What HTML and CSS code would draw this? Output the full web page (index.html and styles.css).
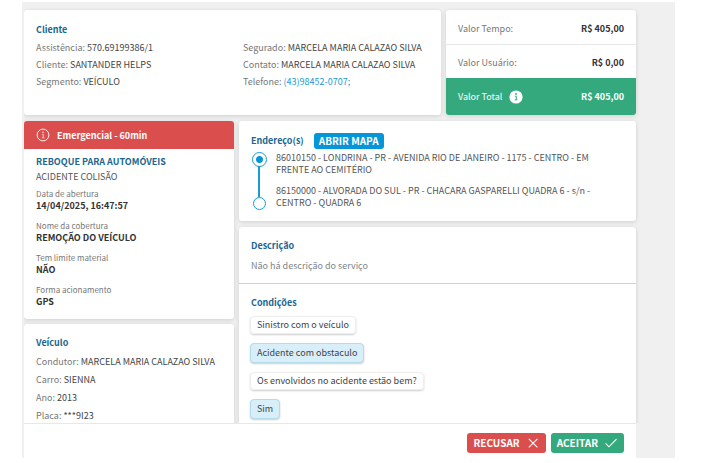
FILE: index.html
```html
<!DOCTYPE html>
<html lang="pt-BR">
<head>
<meta charset="utf-8">
<title>Atendimento</title>
<link rel="stylesheet" href="styles.css">
</head>
<body>
<div class="app">
  <main class="content">
    <div class="row top">
      <section class="card client">
        <div class="client-col">
          <h2>Cliente</h2>
          <p>Assistência: <b>570.69199386/1</b></p>
          <p>Cliente: <b>SANTANDER HELPS</b></p>
          <p>Segmento: <b>VEÍCULO</b></p>
        </div>
        <div class="client-col second">
          <p>Segurado: <b>MARCELA MARIA CALAZAO SILVA</b></p>
          <p>Contato: <b>MARCELA MARIA CALAZAO SILVA</b></p>
          <p>Telefone: <a href="tel:43984520707">(43)98452-0707;</a></p>
        </div>
      </section>
      <section class="card values">
        <div class="value"><span>Valor Tempo:</span><strong>R$ 405,00</strong></div>
        <div class="value"><span>Valor Usuário:</span><strong>R$ 0,00</strong></div>
        <div class="value total">
          <span class="total-label">Valor Total
            <svg class="info" viewBox="0 0 14 14" aria-hidden="true"><circle cx="7" cy="7" r="6.6" fill="#fff"/><path d="M5.9 6.2h1.4v3.4M5.8 9.8h2.6" fill="none" stroke="#35a97e" stroke-width="1"/><circle cx="7" cy="4" r="0.9" fill="#35a97e"/></svg>
          </span>
          <strong>R$ 405,00</strong>
        </div>
      </section>
    </div>
    <div class="row">
      <div class="side">
        <section class="card">
          <div class="alert">
            <svg class="alert-icon" viewBox="0 0 14 14" aria-hidden="true"><circle cx="7" cy="7" r="5.9" fill="none" stroke="#fff" stroke-width="0.9"/><path d="M6.2 6.3h1v3.4M5.9 9.8h2.4" fill="none" stroke="#fff" stroke-width="0.7"/><circle cx="7" cy="4.2" r="0.7" fill="#fff"/></svg>
            Emergencial - 60min
          </div>
          <div class="service">
            <h2>REBOQUE PARA AUTOMÓVEIS</h2>
            <p class="kind">ACIDENTE COLISÃO</p>
            <dl>
              <div><dt>Data de abertura</dt><dd>14/04/2025, 16:47:57</dd></div>
              <div><dt>Nome da cobertura</dt><dd>REMOÇÃO DO VEÍCULO</dd></div>
              <div><dt>Tem limite material</dt><dd>NÃO</dd></div>
              <div><dt>Forma acionamento</dt><dd>GPS</dd></div>
            </dl>
          </div>
        </section>
        <section class="card vehicle">
          <h2>Veículo</h2>
          <p>Condutor: <b>MARCELA MARIA CALAZAO SILVA</b></p>
          <p>Carro: <b>SIENNA</b></p>
          <p>Ano: <b>2013</b></p>
          <p>Placa: <b>***9I23</b></p>
        </section>
      </div>
      <div class="main">
        <section class="card address">
          <div class="address-head"><h2>Endereço(s)</h2><button class="map" type="button">ABRIR MAPA</button></div>
          <ol class="stops">
            <li>86010150 - LONDRINA - PR - AVENIDA RIO DE JANEIRO - 1175 - CENTRO - EM FRENTE AO CEMITÉRIO</li>
            <li>86150000 - ALVORADA DO SUL - PR - CHACARA GASPARELLI QUADRA 6 - s/n - CENTRO - QUADRA 6</li>
          </ol>
        </section>
        <section class="card details">
          <div class="description">
            <h2>Descrição</h2>
            <p>Não há descrição do serviço</p>
          </div>
          <div class="conditions">
            <h2>Condições</h2>
            <ul class="chat">
              <li>Sinistro com o veículo</li>
              <li class="answer">Acidente com obstaculo</li>
              <li>Os envolvidos no acidente estão bem?</li>
              <li class="answer">Sim</li>
            </ul>
          </div>
        </section>
      </div>
    </div>
  </main>
  <footer class="actions">
    <button class="refuse" type="button">RECUSAR
      <svg viewBox="0 0 12 12" aria-hidden="true"><path d="M1.8 1.8l8.6 8.6M10.4 1.8l-8.6 8.6" fill="none" stroke="#fff" stroke-width="1.1"/></svg>
    </button>
    <button class="accept" type="button">ACEITAR
      <svg viewBox="0 0 12 12" aria-hidden="true"><path d="M0.6 6.4l3.4 3.4L11.5 2.2" fill="none" stroke="#fff" stroke-width="1.1"/></svg>
    </button>
  </footer>
</div>
</body>
</html>
```

FILE: styles.css
```css
* {
  box-sizing: border-box;
  margin: 0;
  padding: 0;
}

body {
  height: 100vh;
  padding: 2px 52px 5px 22px;
  background: #fff;
  color: #777;
  font: 9px/17px "Noto Sans CJK SC", "Noto Sans", sans-serif;
}

button {
  border: 0;
  border-radius: 3px;
  color: #fff;
  font: bold 10px/16px "Noto Sans CJK SC", "Noto Sans", sans-serif;
}

h2 {
  color: #1c6690;
  font-size: 9px;
  font-weight: bold;
  line-height: 18px;
}

b {
  color: #444;
  font-weight: 400;
}

a {
  color: #1c9ad2;
  text-decoration: none;
}

ol,
ul {
  list-style: none;
}

.app {
  display: flex;
  flex-direction: column;
  height: 100%;
  padding: 0 39px 0 2px;
  background: #f0f0f0;
}

.content {
  flex: 1;
  min-height: 0;
  padding-top: 8px;
  margin-right: -6px;
  padding-right: 6px;
  overflow: hidden;
}

.row {
  display: flex;
  gap: 5px;
}

.top {
  margin-bottom: 6px;
}

.card {
  border-radius: 3px;
  background: #fff;
  box-shadow: 0 1px 4px rgba(0, 0, 0, 0.14);
}

.client {
  display: flex;
  flex: 1;
  padding: 11px 12px;
}

.client-col {
  flex: 1;
}

.client-col.second {
  flex: none;
  width: 186px;
  padding-top: 18px;
}

.values {
  width: 190px;
  overflow: hidden;
}

.value {
  display: flex;
  align-items: center;
  justify-content: space-between;
  height: 34px;
  padding: 2px 12px 0;
}

.value + .value {
  border-top: 1px solid #e8e8e8;
}

.value strong {
  color: #333;
}

.value.total {
  height: 37px;
  padding-top: 0;
  border: 0;
  background: #35a97e;
  color: #fff;
}

.value.total strong {
  color: #fff;
}

.total-label {
  display: flex;
  align-items: center;
  gap: 7px;
}

.info,
.alert-icon {
  width: 14px;
  height: 14px;
}

.side {
  display: flex;
  flex-direction: column;
  gap: 5px;
  width: 210px;
}

.alert {
  display: flex;
  align-items: center;
  gap: 7px;
  height: 28px;
  padding: 0 12px;
  border-radius: 3px 3px 0 0;
  background: #db4e4e;
  color: #fff;
  font-weight: bold;
}

.service {
  padding: 5px 12px 11px;
}

.service h2 {
  line-height: 16px;
}

.kind {
  color: #555;
  line-height: 14px;
}

dl {
  display: grid;
  gap: 8px;
  padding-top: 4px;
}

dt {
  font-size: 8px;
  line-height: 12px;
}

dd {
  color: #333;
  font-weight: bold;
  line-height: 12px;
}

.vehicle {
  padding: 10px 12px;
}

.vehicle h2 {
  margin-bottom: 1px;
}

.vehicle p {
  line-height: 18px;
}

.main {
  display: flex;
  flex: 1;
  flex-direction: column;
  gap: 6px;
}

.address {
  padding: 11px 12px 12px;
}

.address-head {
  display: flex;
  align-items: center;
  gap: 10px;
}

.map {
  padding: 0 5px;
  background: #0596d7;
}

.stops {
  display: grid;
  gap: 9px;
  padding: 2px 20px 0 0;
  color: #555;
  line-height: 12px;
}

.stops li {
  position: relative;
  padding-left: 25px;
}

.stops li::before {
  content: "";
  position: absolute;
  top: 0;
  left: 1px;
  z-index: 1;
  width: 13px;
  height: 13px;
  border: 1px solid #1c9ad2;
  border-radius: 50%;
  background: radial-gradient(#0596d7 3px, #fff 4px);
}

.stops li:first-child::after {
  content: "";
  position: absolute;
  top: 13px;
  bottom: -21px;
  left: 7px;
  width: 2px;
  background: #1c9ad2;
}

.stops li:last-child::before {
  top: 12px;
  left: 2px;
  width: 11px;
  height: 11px;
  background: #fff;
}

.description {
  padding: 10px 12px 8px;
  border-bottom: 1px solid #d0d0d0;
}

.description p {
  padding-top: 2px;
  color: #7d858c;
  line-height: 18px;
}

.conditions {
  padding: 10px 12px;
}

.chat {
  display: flex;
  flex-direction: column;
  align-items: flex-start;
  gap: 9px;
  margin-left: -1px;
  padding-top: 4px;
}

.chat li {
  padding: 0 6px;
  border: 1px solid #eee;
  border-radius: 4px;
  box-shadow: 0 1px 2px rgba(0, 0, 0, 0.2);
  color: #444;
  line-height: 16px;
}

.chat .answer {
  border-color: #b4dcea;
  background: #d8eef8;
  line-height: 18px;
}

.actions {
  display: flex;
  justify-content: flex-end;
  gap: 5px;
  height: 35px;
  padding: 9px 12px 5px;
  border-top: 1px solid #e8e8e8;
  background: #fff;
}

.actions button {
  display: flex;
  align-items: center;
  gap: 7px;
  height: 20px;
  padding: 0 7px 0 6px;
}

.actions svg {
  width: 12px;
  height: 12px;
}

.refuse {
  background: #db4e4e;
}

.accept {
  background: #35a97e;
}
```
